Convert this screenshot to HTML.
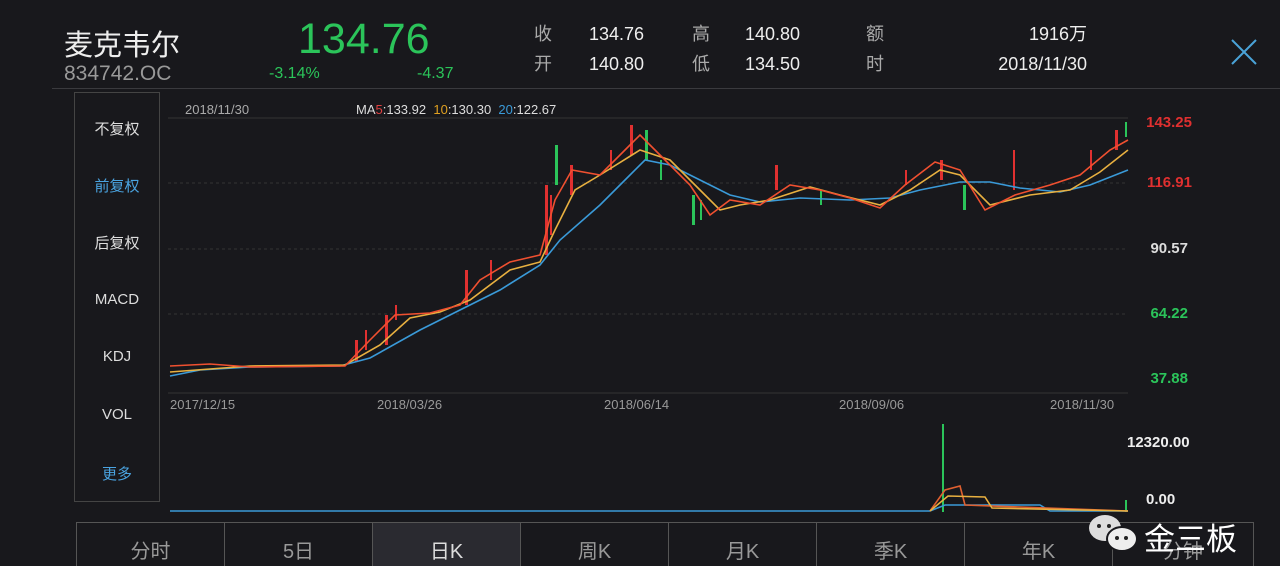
<!DOCTYPE html>
<html><head><meta charset="utf-8"><style>
html,body{margin:0;width:1280px;height:566px;overflow:hidden}
body{background:#18181c;font-family:"Liberation Sans","Noto Sans CJK SC",sans-serif;color:#ddd;position:relative}
.a{position:absolute;white-space:nowrap}
.side{position:absolute;left:74px;top:92px;width:84px;height:408px;border:1px solid #444}
.side div{position:absolute;left:0;width:84px;text-align:center;font-size:15px;color:#ddd}
.tabs{position:absolute;left:76px;top:522px;height:44px;display:flex;border-top:1px solid #555;overflow:hidden}
.tabs div{width:147px;border-left:1px solid #555;text-align:center;font-size:20px;color:#999;line-height:58px}
.r{text-align:right}
</style></head><body>
<div class="a" style="left:64px;top:22px;font-size:29px;color:#eee">麦克韦尔</div>
<div class="a" style="left:64px;top:62px;font-size:21px;color:#999">834742.OC</div>
<div class="a" style="left:298px;top:15px;font-size:43px;color:#2bc45a">134.76</div>
<div class="a" style="left:269px;top:65px;font-size:16px;color:#2bc45a">-3.14%</div>
<div class="a" style="left:417px;top:65px;font-size:16px;color:#2bc45a">-4.37</div>
<div class="a" style="left:534px;top:19px;font-size:18px;color:#aaa;line-height:30px">收<br>开</div>
<div class="a" style="left:589px;top:19px;font-size:18px;color:#eee;line-height:30px">134.76<br>140.80</div>
<div class="a" style="left:692px;top:19px;font-size:18px;color:#aaa;line-height:30px">高<br>低</div>
<div class="a" style="left:745px;top:19px;font-size:18px;color:#eee;line-height:30px">140.80<br>134.50</div>
<div class="a" style="left:866px;top:19px;font-size:18px;color:#aaa;line-height:30px">额<br>时</div>
<div class="a r" style="left:960px;width:127px;top:19px;font-size:18px;color:#eee;line-height:30px">1916万<br>2018/11/30</div>
<svg class="a" style="left:1230px;top:38px" width="28" height="28"><path d="M2 2L26 26M26 2L2 26" stroke="#4aa3d8" stroke-width="2"/></svg>
<div class="a" style="left:52px;top:88px;width:1228px;height:1px;background:#3a3a3e"></div>
<div class="side">
<div style="top:25px">不复权</div><div style="top:82px;color:#4aa3e0">前复权</div><div style="top:139px">后复权</div><div style="top:198px">MACD</div><div style="top:255px">KDJ</div><div style="top:313px">VOL</div><div style="top:370px;color:#4aa3e0">更多</div>
</div>
<div class="a" style="left:185px;top:102px;font-size:13px;color:#aaa">2018/11/30</div>
<div class="a" style="left:356px;top:102px;font-size:13px;color:#ddd">MA<span style="color:#e04040">5</span>:133.92 &nbsp;<span style="color:#e0a020">10</span>:130.30 &nbsp;<span style="color:#3a9ad8">20</span>:122.67</div>
<svg class="a" style="left:0;top:0" width="1280" height="566">
<g stroke="#333" stroke-dasharray="3,3"><line x1="168" y1="118" x2="1128" y2="118" stroke-dasharray="0"/><line x1="168" y1="183" x2="1128" y2="183"/><line x1="168" y1="249" x2="1128" y2="249"/><line x1="168" y1="314" x2="1128" y2="314"/><line x1="168" y1="393" x2="1128" y2="393" stroke-dasharray="0"/></g>
<g fill="#e03030"><rect x="355" y="340" width="3" height="22"/><rect x="365" y="330" width="2" height="20"/><rect x="385" y="315" width="3" height="30"/><rect x="395" y="305" width="2" height="15"/><rect x="465" y="270" width="3" height="35"/><rect x="490" y="260" width="2" height="20"/><rect x="545" y="185" width="3" height="70"/><rect x="550" y="195" width="2" height="40"/><rect x="570" y="165" width="3" height="30"/><rect x="610" y="150" width="2" height="20"/><rect x="630" y="125" width="3" height="30"/><rect x="775" y="165" width="3" height="25"/><rect x="905" y="170" width="2" height="15"/><rect x="940" y="160" width="3" height="20"/><rect x="1013" y="150" width="2" height="40"/><rect x="1090" y="150" width="2" height="20"/><rect x="1115" y="130" width="3" height="20"/></g>
<g fill="#2bc45a"><rect x="555" y="145" width="3" height="40"/><rect x="645" y="130" width="3" height="30"/><rect x="660" y="160" width="2" height="20"/><rect x="692" y="195" width="3" height="30"/><rect x="700" y="200" width="2" height="20"/><rect x="820" y="190" width="2" height="15"/><rect x="963" y="185" width="3" height="25"/><rect x="1125" y="122" width="2" height="15"/><rect x="942" y="424" width="2" height="88"/><rect x="1125" y="500" width="2" height="12"/></g>
<g fill="none" stroke-width="1.6">
<polyline stroke="#3a9ad8" points="170,376 200,370 250,367 340,366 370,358 420,330 460,310 500,290 540,265 560,240 600,205 630,175 645,160 670,165 700,180 730,195 760,202 800,198 850,200 890,198 920,190 960,182 990,182 1020,188 1060,192 1090,185 1128,170"/>
<polyline stroke="#e8b040" points="170,372 250,366 345,365 380,345 410,318 440,312 470,300 510,270 540,262 555,230 575,190 600,175 640,150 670,160 700,190 720,210 740,205 770,200 810,187 840,195 880,205 910,190 940,170 960,175 990,205 1030,195 1070,190 1100,172 1128,150"/>
<polyline stroke="#f05030" points="170,366 210,364 250,367 345,366 370,340 395,315 430,313 460,305 480,280 510,262 540,255 555,200 572,170 600,175 630,145 640,135 660,155 690,185 710,215 730,200 760,205 790,185 820,190 850,198 880,208 905,185 935,162 960,170 985,210 1015,195 1050,185 1080,175 1110,150 1128,140"/>
<polyline stroke="#3a9ad8" points="170,511 930,511 945,505 1040,505 1050,511 1128,511"/>
<polyline stroke="#e06030" points="930,511 945,490 960,486 965,505 1128,511"/>
<polyline stroke="#e8b040" points="930,511 948,496 985,497 992,508 1128,511"/>
</g>
</svg>
<div class="a r" style="left:1100px;width:92px;top:114px;font-size:15px;color:#e03030;font-weight:bold">143.25</div>
<div class="a r" style="left:1100px;width:92px;top:174px;font-size:15px;color:#e03030;font-weight:bold">116.91</div>
<div class="a r" style="left:1100px;width:88px;top:240px;font-size:15px;color:#ddd;font-weight:bold">90.57</div>
<div class="a r" style="left:1100px;width:88px;top:305px;font-size:15px;color:#2bc45a;font-weight:bold">64.22</div>
<div class="a r" style="left:1100px;width:88px;top:370px;font-size:15px;color:#2bc45a;font-weight:bold">37.88</div>
<div class="a" style="left:170px;top:397px;font-size:13px;color:#999">2017/12/15</div>
<div class="a" style="left:377px;top:397px;font-size:13px;color:#999">2018/03/26</div>
<div class="a" style="left:604px;top:397px;font-size:13px;color:#999">2018/06/14</div>
<div class="a" style="left:839px;top:397px;font-size:13px;color:#999">2018/09/06</div>
<div class="a" style="left:1050px;top:397px;font-size:13px;color:#999">2018/11/30</div>
<div class="a" style="left:1127px;top:434px;font-size:15px;color:#eee;font-weight:bold">12320.00</div>
<div class="a" style="left:1146px;top:491px;font-size:15px;color:#eee;font-weight:bold">0.00</div>
<div class="tabs"><div>分时</div><div>5日</div><div style="background:#2a2a30;color:#ddd">日K</div><div>周K</div><div>月K</div><div>季K</div><div>年K</div><div style="border-right:1px solid #555;width:140px">分钟</div></div>
<svg class="a" style="left:1086px;top:512px" width="56" height="44"><ellipse cx="19" cy="16" rx="16" ry="13" fill="#ddd"/><ellipse cx="36" cy="27" rx="15" ry="12" fill="#eee" stroke="#18181c" stroke-width="2"/><circle cx="13" cy="14" r="2" fill="#222"/><circle cx="23" cy="14" r="2" fill="#222"/><circle cx="31" cy="26" r="2" fill="#222"/><circle cx="40" cy="26" r="2" fill="#222"/></svg>
<div class="a" style="left:1144px;top:514px;font-size:31px;color:#fff">金三板</div>
</body></html>
